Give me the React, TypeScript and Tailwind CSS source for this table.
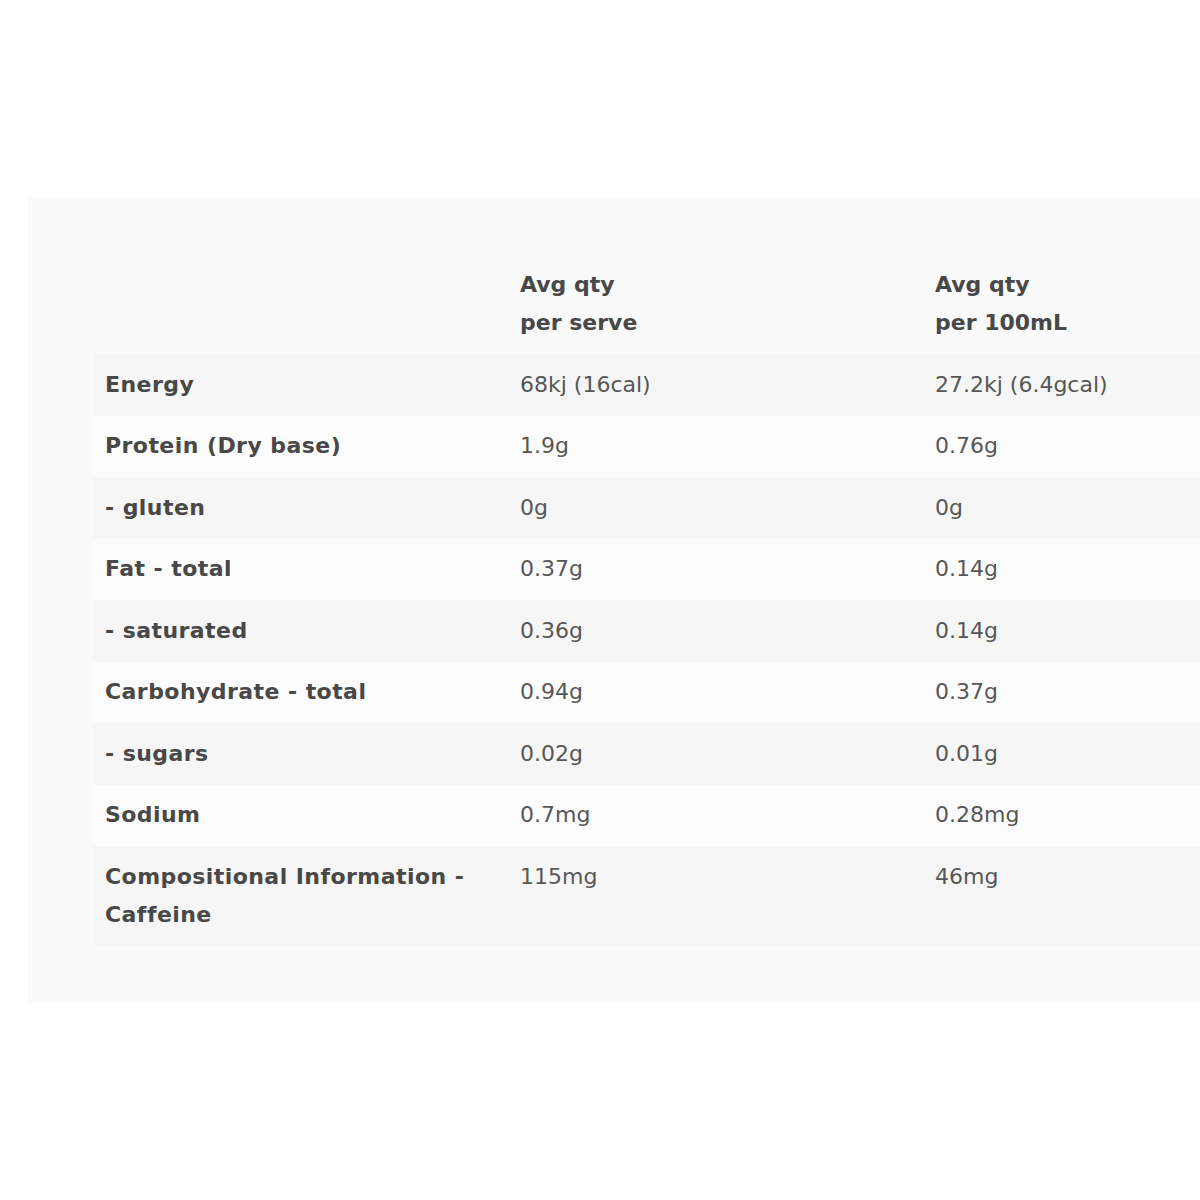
import React from "react";

type NutritionRow = {
  label: string;
  perServe: string;
  per100: string;
};

const rows: NutritionRow[] = [
  { label: "Energy", perServe: "68kj (16cal)", per100: "27.2kj (6.4gcal)" },
  { label: "Protein (Dry base)", perServe: "1.9g", per100: "0.76g" },
  { label: "- gluten", perServe: "0g", per100: "0g" },
  { label: "Fat - total", perServe: "0.37g", per100: "0.14g" },
  { label: "- saturated", perServe: "0.36g", per100: "0.14g" },
  { label: "Carbohydrate - total", perServe: "0.94g", per100: "0.37g" },
  { label: "- sugars", perServe: "0.02g", per100: "0.01g" },
  { label: "Sodium", perServe: "0.7mg", per100: "0.28mg" },
  {
    label: "Compositional Information - Caffeine",
    perServe: "115mg",
    per100: "46mg",
  },
];

export default function App() {
  return (
    <div
      className="w-[1200px] h-[1200px] bg-white overflow-hidden pt-[197px]"
      style={{ fontFamily: '"DejaVu Sans", "Open Sans", sans-serif' }}
    >
      <div className="ml-[28px] w-[1240px] bg-[#fafafa] px-[65px] py-[57px]">
        <table className="w-[1245px] border-collapse text-[22px] leading-[38px] text-[#484848]">
          <thead>
            <tr>
              <th className="w-[415px] px-3 py-3"></th>
              <th className="w-[415px] px-3 py-3 text-left align-top font-bold">
                Avg qty
                <br />
                per serve
              </th>
              <th className="w-[415px] px-3 py-3 text-left align-top font-bold">
                Avg qty
                <br />
                per 100mL
              </th>
            </tr>
          </thead>
          <tbody>
            {rows.map((row, i) => (
              <tr
                key={row.label}
                className={i % 2 === 0 ? "bg-[#f6f6f6]" : "bg-[#fcfcfc]"}
              >
                <td className="px-3 py-[11.75px] align-top font-bold tracking-[0.02em] pr-8">
                  {row.label}
                </td>
                <td className="px-3 py-[11.75px] align-top font-normal text-[#575757]">
                  {row.perServe}
                </td>
                <td className="px-3 py-[11.75px] align-top font-normal text-[#575757]">
                  {row.per100}
                </td>
              </tr>
            ))}
          </tbody>
        </table>
      </div>
    </div>
  );
}
